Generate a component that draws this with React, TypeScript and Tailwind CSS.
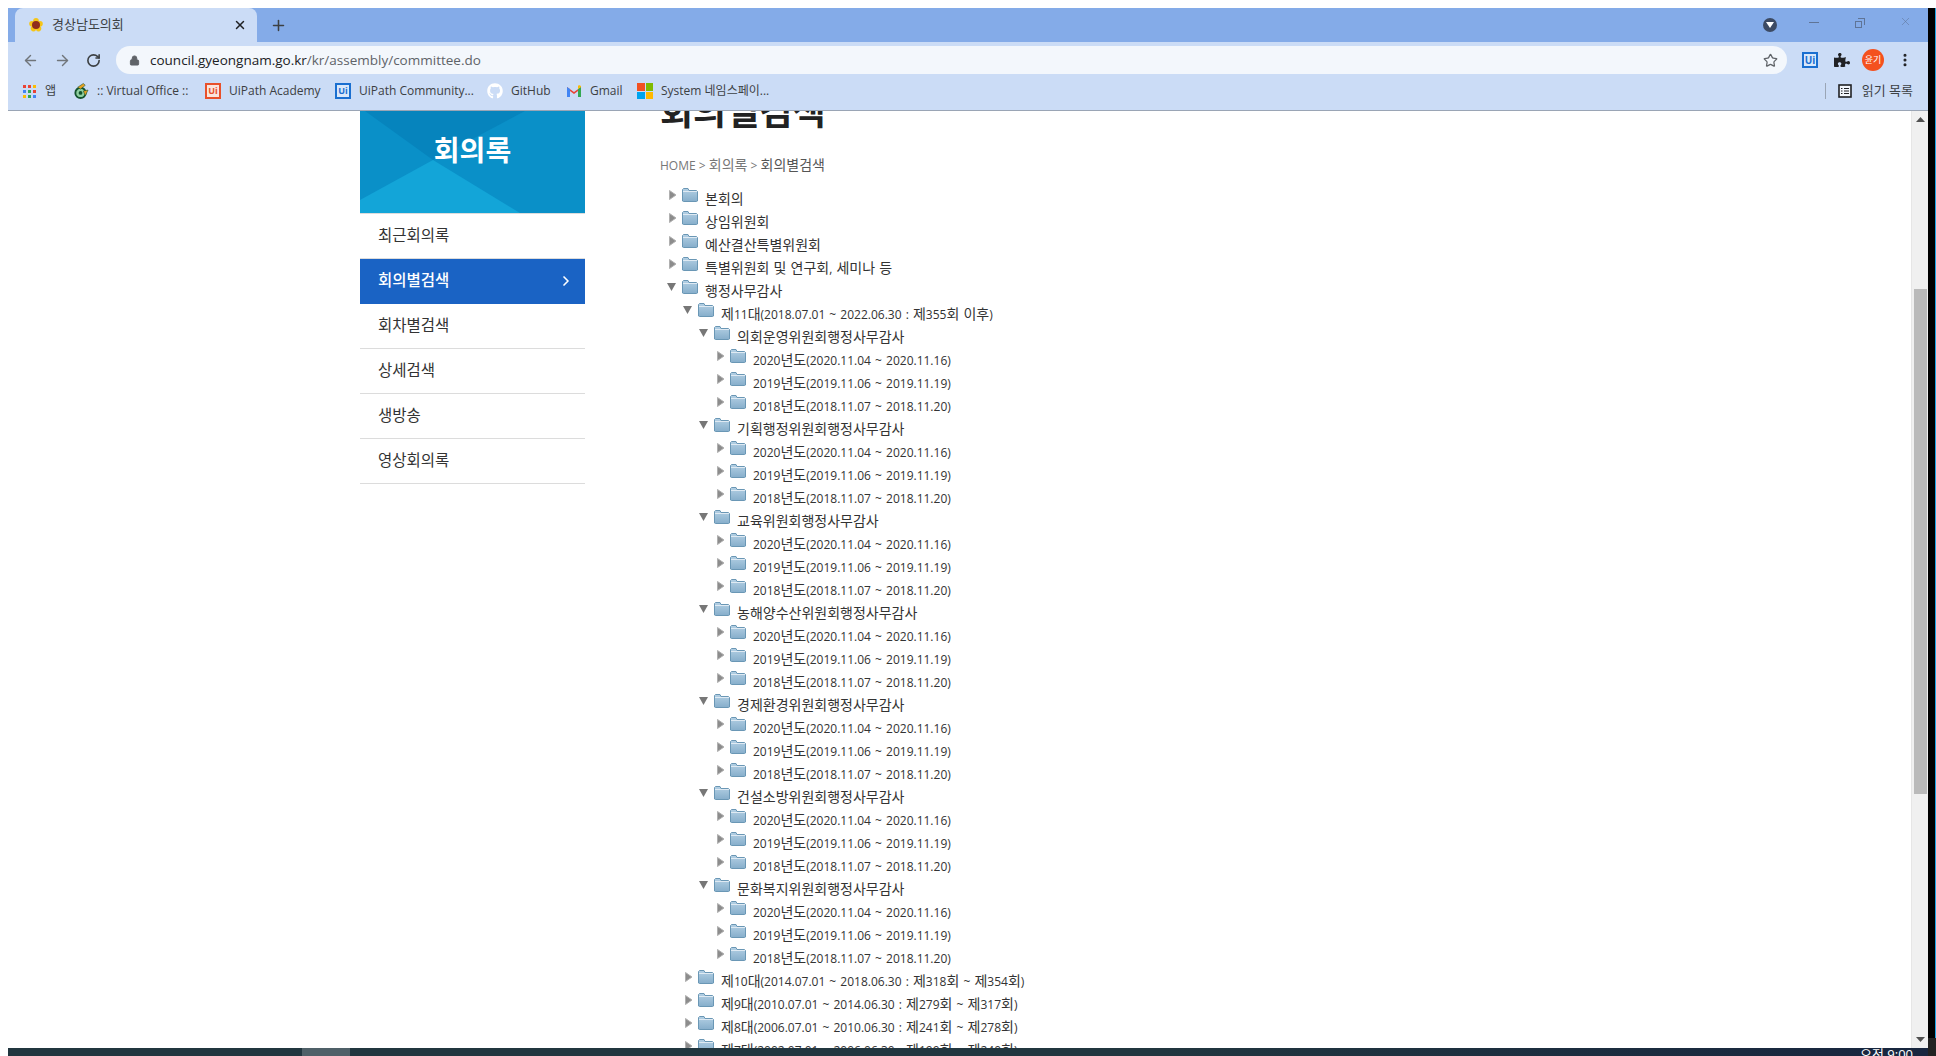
import { ArrowLeft, ArrowRight, ChevronRight, Lock, MoreVertical, Plus, RotateCw, Star, X } from "lucide-react";
import { FaGithub, FaPuzzlePiece } from "react-icons/fa";

const uiFont = "font-['Open_Sans','Noto_Sans_CJK_KR',sans-serif]";

const years = ["2020년도(2020.11.04 ~ 2020.11.16)", "2019년도(2019.11.06 ~ 2019.11.19)", "2018년도(2018.11.07 ~ 2018.11.20)"];

const committees = [
    "의회운영위원회행정사무감사",
    "기획행정위원회행정사무감사",
    "교육위원회행정사무감사",
    "농해양수산위원회행정사무감사",
    "경제환경위원회행정사무감사",
    "건설소방위원회행정사무감사",
    "문화복지위원회행정사무감사",
];

const sideMenu = ["최근회의록", "회의별검색", "회차별검색", "상세검색", "생방송", "영상회의록"];

// Hangul runs wider than the latin in the original font, so they get a bigger size
function MixedText({ text }: { text: string }) {
    return (
        <>
            {text.split(/([가-힣]+)/).map((part, i) =>
                i % 2 === 1 ? <span key={i} className="text-[14px]">{part}</span> : <span key={i}>{part}</span>
            )}
        </>
    );
}

function FolderIcon() {
    return (
        <svg width="16" height="14" viewBox="0 0 16 14" className="shrink-0">
            <defs>
                <linearGradient id="folderFill" x1="0" y1="0" x2="0" y2="1">
                    <stop offset="0" stopColor="#b4d0e4" />
                    <stop offset="1" stopColor="#86aecb" />
                </linearGradient>
            </defs>
            <path d="M0.5 13V1.5L1.5 0.5H6L7 2.5H14.5L15.5 3.5V13L14.5 13.5H1.5Z" fill="url(#folderFill)" stroke="#6a97b5" />
            <path d="M1 3.5H15" stroke="#dfeaf3" />
        </svg>
    );
}

function TreeRow({ level, open, label }: { level: number; open?: boolean; label: string }) {
    const indent = ["pl-[8px]", "pl-[24px]", "pl-[40px]", "pl-[56px]"][level];
    return (
        <div className={`flex h-[23px] items-start ${indent}`}>
            <div className="mt-[2px] flex h-[14px] w-[14px] shrink-0 items-center justify-start">
                {open ? (
                    <svg width="9" height="8" viewBox="0 0 9 8" className="-ml-px"><path d="M0 0H9L4.5 8Z" fill="#777" /></svg>
                ) : (
                    <svg width="8" height="10" viewBox="0 0 8 10" className="ml-px"><path d="M0.5 0.5L7 5L0.5 9.5Z" fill="#8c8c8c" stroke="#b0b0b0" /></svg>
                )}
            </div>
            <div className="mt-[2px]"><FolderIcon /></div>
            <span className="ml-[7px] mt-[3px] whitespace-nowrap text-[12px] leading-[20px] text-[#333] [word-spacing:1px]">
                <MixedText text={label} />
            </span>
        </div>
    );
}

function ChromeBar() {
    const bookmarks = [
        { text: "앱", w: "w-[12px]", icon: <div className="grid h-[13px] w-[13px] grid-cols-3 gap-[2px]">
            {["#ea4335", "#ea4335", "#fbbc05", "#4285f4", "#34a853", "#ea4335", "#fbbc05", "#34a853", "#4285f4"].map((c, i) => (
                <span key={i} className="h-[3px] w-[3px]" style={{ backgroundColor: c }} />
            ))}
        </div> },
        { text: ":: Virtual Office ::", w: "w-[92px]", icon: <svg width="17" height="18" viewBox="0 0 17 18"><circle cx="8" cy="11" r="5.5" fill="#8fd0a0" stroke="#14532d" strokeWidth="2" /><path d="M5 5L11 1L13 3L8 7Z" fill="#e8a020" stroke="#14532d" strokeWidth="0.6" /><path d="M11 9L16 8L13 14Z" fill="#e8a020" stroke="#14532d" strokeWidth="0.6" /><circle cx="8" cy="11" r="2" fill="#14532d" /></svg> },
        { text: "UiPath Academy", w: "w-[90px]", icon: <div className="flex h-[16px] w-[16px] items-center justify-center border-2 border-[#e8502a] bg-[#fbe4dc] text-[9px] font-bold text-[#e8502a]">Ui</div> },
        { text: "UiPath Community...", w: "w-[112px]", icon: <div className="flex h-[16px] w-[16px] items-center justify-center border-2 border-[#1a6fd0] bg-[#d9e8fa] text-[9px] font-bold text-[#1a6fd0]">Ui</div> },
        { text: "GitHub", w: "w-[39px]", icon: <FaGithub className="h-[16px] w-[16px] text-white" /> },
        { text: "Gmail", w: "w-[31px]", icon: <svg width="16" height="12" viewBox="0 0 16 12"><path d="M1 12V2L8 7L15 2V12H12V6L8 9L4 6V12Z" fill="#ea4335" /><path d="M1 12V2L4 4V12Z" fill="#4285f4" /><path d="M15 12V2L12 4V12Z" fill="#34a853" /><path d="M12 4L15 2V1L13 0L12 1Z" fill="#fbbc05" /></svg> },
        { text: "System 네임스페이...", w: "w-[112px]", icon: <div className="grid h-[16px] w-[16px] grid-cols-2 gap-[1px]"><span className="bg-[#f25022]" /><span className="bg-[#7fba00]" /><span className="bg-[#00a4ef]" /><span className="bg-[#ffb900]" /></div> },
    ];

    return (
        <header className={`h-[103px] shrink-0 ${uiFont}`}>
            {/* tab strip */}
            <div className="flex h-[34px] items-end bg-[#84abe8] pl-[7px] pr-[16px]">
                <div className="flex h-[34px] w-[242px] items-center rounded-t-[8px] bg-[#cbdcf6] pl-[14px] pr-[10px]">
                    <svg width="14" height="14" viewBox="0 0 14 14">
                        <circle cx="7" cy="2.8" r="2.8" fill="#f5c518" />
                        <circle cx="11" cy="5.7" r="2.8" fill="#f5c518" />
                        <circle cx="9.5" cy="10.6" r="2.8" fill="#f5c518" />
                        <circle cx="4.5" cy="10.6" r="2.8" fill="#f5c518" />
                        <circle cx="3" cy="5.7" r="2.8" fill="#f5c518" />
                        <circle cx="7" cy="7" r="4" fill="#8f2d1c" />
                    </svg>
                    <span className="ml-[9px] text-[13px] text-[#3c4043]">경상남도의회</span>
                    <X className="ml-auto h-[14px] w-[14px] text-[#202124]" strokeWidth={2.5} />
                </div>
                <Plus className="mb-[8px] ml-[13px] h-[17px] w-[17px] text-[#3c4043]" strokeWidth={2.2} />
                <div className="ml-auto mb-[10px] flex h-[14px] w-[14px] items-center justify-center rounded-full bg-[#3c4a63]">
                    <svg width="8" height="6" viewBox="0 0 8 6"><path d="M0 0H8L4 6Z" fill="#fff" /></svg>
                </div>
                <div className="mb-[19px] ml-[32px] h-px w-[10px] bg-[#5f7496]" />
                <div className="relative mb-[14px] ml-[36px] h-[10px] w-[10px]">
                    <div className="absolute bottom-0 left-0 h-[7px] w-[7px] border border-[#5f7496]" />
                    <div className="absolute right-0 top-0 h-[7px] w-[7px] border-r border-t border-[#5f7496]" />
                </div>
                <X className="mb-[14px] ml-[34px] h-[13px] w-[13px] text-[#5f7496]" strokeWidth={1} />
            </div>

            {/* address row */}
            <div className="flex h-[36px] items-center bg-[#cbdcf6] pl-[14px] pr-[14px]">
                <ArrowLeft className="h-[17px] w-[17px] text-[#70757a]" strokeWidth={2} />
                <ArrowRight className="ml-[15px] h-[17px] w-[17px] text-[#70757a]" strokeWidth={2} />
                <RotateCw className="ml-[15px] h-[15px] w-[15px] text-[#3c4043]" strokeWidth={2.6} />
                <div className="ml-[15px] flex h-[28px] w-[1671px] items-center rounded-full bg-[#f3f7fc] pl-[13px] pr-[9px]">
                    <Lock className="h-[11px] w-[11px] text-[#5f6368]" fill="#5f6368" />
                    <span className="ml-[10px] text-[13.5px] text-[#202124]">council.gyeongnam.go.kr<span className="text-[#5f6368]">/kr/assembly/committee.do</span></span>
                    <Star className="ml-auto h-[15px] w-[15px] text-[#5f6368]" strokeWidth={2} />
                </div>
                <div className="ml-[15px] flex h-[16px] w-[16px] items-center justify-center border-2 border-[#1a6fd0] bg-[#d9e8fa] text-[10px] font-bold text-[#1a6fd0]">Ui</div>
                <FaPuzzlePiece className="ml-[16px] h-[16px] w-[16px] text-[#202124]" />
                <div className="ml-[12px] flex h-[22px] w-[22px] items-center justify-center rounded-full bg-[#f4511e] text-[9px] text-white">윤기</div>
                <MoreVertical className="ml-[13px] h-[16px] w-[16px] text-[#202124]" strokeWidth={2.6} />
            </div>

            {/* bookmarks */}
            <div className="flex h-[33px] items-center border-b border-[#9aa5b5] bg-[#cbdcf6] pb-[6px] pl-[13px] pr-[15px] text-[12px] text-[#3c4043]">
                {bookmarks.map((b) => (
                    <div key={b.text} className="mr-[16px] flex items-center">
                        <div className="flex w-[16px] justify-center">{b.icon}</div>
                        <span className={`ml-[8px] whitespace-nowrap ${b.w}`}>{b.text}</span>
                    </div>
                ))}
                <div className="ml-auto h-[16px] w-px bg-[#9aa5b5]" />
                <svg width="14" height="14" viewBox="0 0 14 14" className="ml-[12px]"><rect x="1" y="1" width="12" height="12" fill="#f3f7fc" stroke="#202124" strokeWidth="1.6" /><path d="M3 4.5H4.5M6 4.5H11M3 7H4.5M6 7H11M3 9.5H4.5M6 9.5H11" stroke="#202124" /></svg>
                <span className="ml-[10px] whitespace-nowrap text-[13px]">읽기 목록</span>
            </div>
        </header>
    );
}

export default function App() {
    return (
        <div className="flex h-screen w-full overflow-hidden bg-white">
            <div className="w-[8px] shrink-0 bg-white" />
            <div className="flex min-w-0 flex-1 flex-col pt-[8px]">
                <ChromeBar />

                <div className="flex min-h-0 flex-1">
                    {/* page content, scrolled down so the top is cut off */}
                    <main className={`flex min-w-0 flex-1 overflow-hidden pl-[352px] ${uiFont}`}>
                        <aside className="w-[225px] shrink-0">
                            <div className="relative flex h-[102px] items-center justify-center overflow-hidden bg-[#0a90c8] pb-[24px]">
                                <svg className="absolute inset-0 h-full w-full" viewBox="0 0 225 102" preserveAspectRatio="none">
                                    <path d="M5 0H165L73 49Z" fill="#0684bd" />
                                    <path d="M0 89L73 49L160 102H0Z" fill="#13a5d8" />
                                </svg>
                                <h2 className="relative text-[28px] font-bold text-white">회의록</h2>
                            </div>
                            <ul className="border-t border-[#dcdcdc]">
                                {sideMenu.map((item, i) => (
                                    <li
                                        key={item}
                                        className={`flex h-[45px] items-center justify-between border-b pb-px pl-[18px] pr-[11px] text-[15.5px] ${i === 1 ? "border-[#1a63c4] bg-[#1a63c4] font-medium text-white" : "border-[#dcdcdc] text-[#333]"}`}
                                    >
                                        {item}
                                        {i === 1 && <ChevronRight className="h-[16px] w-[16px] text-white" strokeWidth={2.5} />}
                                    </li>
                                ))}
                            </ul>
                        </aside>

                        <section className="ml-[75px] min-w-0 flex-1">
                            <h1 className="-mt-[23px] h-[47px] text-[36px] font-bold leading-[47px] text-[#222]">회의별검색</h1>
                            <div className="mt-[19px] text-[12px] text-[#777]">
                                <MixedText text="HOME > 회의록 > " />
                                <span className="text-[#555]"><MixedText text="회의별검색" /></span>
                            </div>
                            <div className="mt-[11px]">
                                <TreeRow level={0} label="본회의" />
                                <TreeRow level={0} label="상임위원회" />
                                <TreeRow level={0} label="예산결산특별위원회" />
                                <TreeRow level={0} label="특별위원회 및 연구회, 세미나 등" />
                                <TreeRow level={0} open label="행정사무감사" />
                                <TreeRow level={1} open label="제11대(2018.07.01 ~ 2022.06.30 : 제355회 이후)" />
                                {committees.map((name) => (
                                    <div key={name}>
                                        <TreeRow level={2} open label={name} />
                                        {years.map((y) => (
                                            <TreeRow key={y} level={3} label={y} />
                                        ))}
                                    </div>
                                ))}
                                <TreeRow level={1} label="제10대(2014.07.01 ~ 2018.06.30 : 제318회 ~ 제354회)" />
                                <TreeRow level={1} label="제9대(2010.07.01 ~ 2014.06.30 : 제279회 ~ 제317회)" />
                                <TreeRow level={1} label="제8대(2006.07.01 ~ 2010.06.30 : 제241회 ~ 제278회)" />
                                <TreeRow level={1} label="제7대(2002.07.01 ~ 2006.06.30 : 제199회 ~ 제240회)" />
                            </div>
                        </section>
                    </main>

                    {/* scrollbar */}
                    <div className="flex w-[17px] shrink-0 flex-col items-center border-l border-[#e6e6e6] bg-[#f0f0f0]">
                        <div className="flex h-[17px] items-center justify-center">
                            <svg width="9" height="5" viewBox="0 0 9 5"><path d="M0 5H9L4.5 0Z" fill="#505050" /></svg>
                        </div>
                        <div className="mt-[161px] h-[505px] w-[13px] bg-[#bababa]" />
                        <div className="mt-auto flex h-[17px] items-center justify-center">
                            <svg width="9" height="5" viewBox="0 0 9 5"><path d="M0 0H9L4.5 5Z" fill="#505050" /></svg>
                        </div>
                    </div>
                </div>

                {/* taskbar, only its top edge is on screen */}
                <div className={`relative z-10 flex h-[8px] shrink-0 overflow-hidden bg-linear-to-r from-[#21363f] from-60% to-[#18263f] ${uiFont}`}>
                    <div className="ml-[294px] w-[48px] bg-[#4f6068]" />
                    <span className="relative -top-[1px] ml-auto block pr-[15px] text-[13px] leading-[14px] text-white">오전 9:00</span>
                </div>
            </div>
            <div className="relative mt-[8px] w-[8px] shrink-0 bg-black">
                <div className="absolute bottom-0 right-0 top-0 w-px bg-[#1ea7e8]" />
                <div className="absolute bottom-0 left-0 h-[18px] w-full bg-[#222]" />
            </div>
        </div>
    );
}
